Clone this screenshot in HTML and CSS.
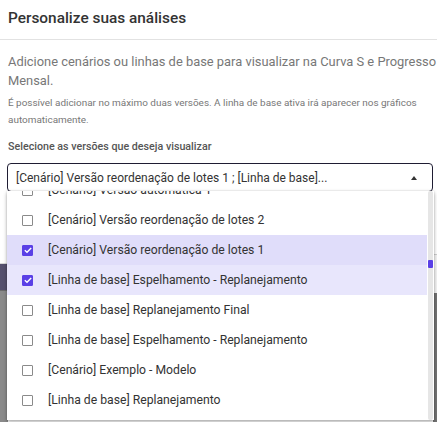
FILE: index.html
```html
<!DOCTYPE html>
<html lang="pt-BR">
<head>
<meta charset="utf-8">
<link rel="stylesheet" href="styles.css">
</head>
<body>
<div class="backdrop-left"><div class="band"></div></div>
<div class="backdrop-right"></div>
<div class="dialog">
  <header class="dialog-header">Personalize suas análises</header>
  <section class="dialog-body">
    <p class="lead">Adicione cenários ou linhas de base para visualizar na Curva S e Progresso Mensal.</p>
    <p class="hint">É possível adicionar no máximo duas versões. A linha de base ativa irá aparecer nos gráficos automaticamente.</p>
    <div class="label">Selecione as versões que deseja visualizar</div>
    <div class="select-wrap">
      <div class="select">
        <span class="select-value">[Cenário] Versão reordenação de lotes 1 ; [Linha de base]...</span>
        <span class="caret"></span>
      </div>
      <div class="menu">
        <ul class="options">
          <li class="option"><span class="box"></span><span>[Cenário] Versão automática 1</span></li>
          <li class="option"><span class="box"></span><span>[Cenário] Versão reordenação de lotes 2</span></li>
          <li class="option checked hover"><span class="box"><svg viewBox="0 0 12 12" width="12" height="12"><path d="M2.8 6.2 L5 8.2 L9.2 3.9" fill="none" stroke="#fff" stroke-width="1.4"/></svg></span><span>[Cenário] Versão reordenação de lotes 1</span></li>
          <li class="option checked"><span class="box"><svg viewBox="0 0 12 12" width="12" height="12"><path d="M2.8 6.2 L5 8.2 L9.2 3.9" fill="none" stroke="#fff" stroke-width="1.4"/></svg></span><span>[Linha de base] Espelhamento - Replanejamento</span></li>
          <li class="option"><span class="box"></span><span>[Linha de base] Replanejamento Final</span></li>
          <li class="option"><span class="box"></span><span>[Linha de base] Espelhamento - Replanejamento</span></li>
          <li class="option"><span class="box"></span><span>[Cenário] Exemplo - Modelo</span></li>
          <li class="option"><span class="box"></span><span>[Linha de base] Replanejamento</span></li>
        </ul>
        <div class="scrollbar"><div class="thumb"></div></div>
      </div>
    </div>
  </section>
</div>
</body>
</html>
```

FILE: styles.css
```css
* { box-sizing: border-box; }
html, body { margin: 0; padding: 0; background: #fff; }
body {
  font-family: Roboto, "Noto Sans", "Liberation Sans", sans-serif;
  color: #333;
  width: 437px;
  height: 422px;
  overflow: hidden;
  position: relative;
}
.backdrop-left {
  position: absolute;
  left: 0; top: 263px;
  width: 8px; height: 159px;
  background: #8a8a8a;
  border-top: 1px solid #d8d8d8;
}
.backdrop-left .band { height: 27px; background: #55506e; border-bottom: 1px solid #6b6b6b; }
.backdrop-right {
  position: absolute;
  right: 0; top: 254px;
  width: 4px; height: 168px;
  border-top: 1px solid #cfcfcf;
  background: linear-gradient(#f4f4f4 0, #f4f4f4 38px, #737373 38px);
}
.dialog { position: relative; }
.dialog-header {
  height: 40px;
  padding: 8px 8px 0;
  font-size: 15.4px;
  line-height: 20px;
  font-weight: 500;
  color: #333;
  border-bottom: 1px solid #e2e2e2;
}
.dialog-body { padding: 0 0 0 8px; }
.lead {
  margin: 12px 0 0;
  font-size: 12.9px;
  line-height: 19px;
  color: #777;
}
.hint {
  margin: 4px 0 0;
  font-size: 9.95px;
  line-height: 17px;
  color: #777;
}
.label {
  margin-top: 12px;
  font-size: 10.7px;
  line-height: 14px;
  color: #555;
  font-weight: 500;
}
.select-wrap { position: relative; margin: 9px 4px 0 -1px; }
.select {
  height: 29px;
  border: 1px solid #1f1d33;
  border-radius: 4px;
  display: flex;
  align-items: center;
  justify-content: space-between;
  padding: 0 15px 0 8px;
  font-size: 12px;
  color: #333;
  background: #fff;
}
.caret {
  width: 0; height: 0;
  border-left: 3.5px solid transparent;
  border-right: 3.5px solid transparent;
  border-bottom: 4px solid #333;
}
.menu {
  position: absolute;
  left: 0; top: 28px;
  width: 427px; height: 229px;
  background: #fff;
  box-shadow: 0 2px 4px rgba(0,0,0,0.3), 0 0 2px rgba(0,0,0,0.15);
  overflow: hidden;
  display: flex;
}
.options {
  list-style: none;
  margin: -16px 0 0;
  padding: 0;
  width: 420px;
  flex: none;
}
.option {
  height: 30px;
  display: flex;
  align-items: center;
  font-size: 12.2px;
  color: #333;
  padding-left: 15px;
}
.option.checked { background: #e8e6fc; }
.option.hover { background: #e0ddfa; }
.box {
  width: 11px; height: 11px;
  border: 1.4px solid #8a8a8a;
  border-radius: 1px;
  margin-right: 15px;
  flex: none;
  display: flex;
  align-items: center;
  justify-content: center;
}
.box svg { display: block; flex: none; }
.checked .box { background: #5a40e6; border-color: #5a40e6; }
.scrollbar {
  width: 5px;
  margin-left: 1px;
  background: #e6e6e6;
  border-radius: 2px;
  position: relative;
}
.thumb {
  position: absolute;
  left: 0; top: 69px;
  width: 5px; height: 8px;
  background: #5a40e6;
  border-radius: 1px;
}
```
